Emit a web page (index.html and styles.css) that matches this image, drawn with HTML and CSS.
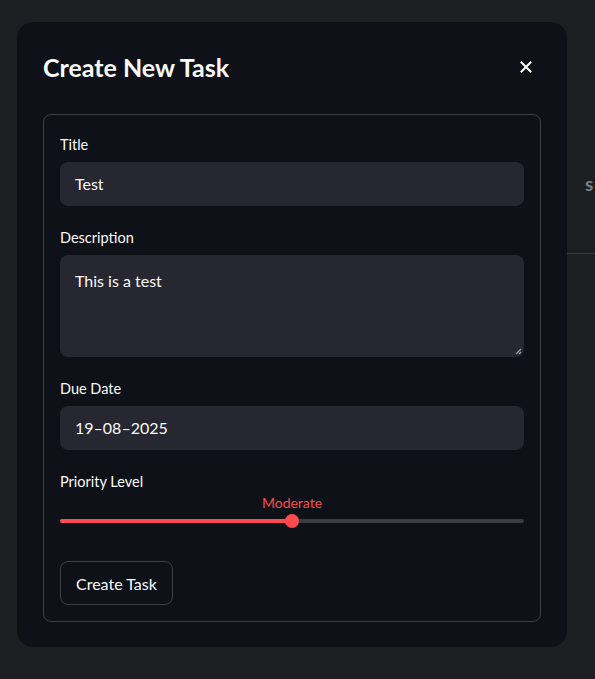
FILE: index.html
```html
<!DOCTYPE html>
<html>
<head>
<meta charset="utf-8">
<link rel="stylesheet" href="styles.css">
</head>
<body>
<div class="backdrop">
  <div class="bg-page">
    <div class="bg-text">s</div>
    <div class="bg-rule"></div>
  </div>
  <div class="modal">
    <div class="modal-head">
      <h2 class="modal-title">Create New Task</h2>
      <button class="close" aria-label="Close">
        <svg width="12" height="12" viewBox="0 0 12 12"><path d="M1.5 1.5L10.5 10.5M10.5 1.5L1.5 10.5" stroke="#fafafa" stroke-width="2" stroke-linecap="square"/></svg>
      </button>
    </div>
    <form class="form">
      <div class="field">
        <label class="label">Title</label>
        <div class="input">Test</div>
      </div>
      <div class="field">
        <label class="label">Description</label>
        <div class="input textarea">This is a test
          <svg class="grip" width="8" height="8" viewBox="0 0 8 8"><path d="M7 2L2 7M7 5L5 7" stroke="#a0a0a8" stroke-width="1.2"/></svg>
        </div>
      </div>
      <div class="field">
        <label class="label">Due Date</label>
        <div class="input">19–08–2025</div>
      </div>
      <div class="field slider-field">
        <label class="label">Priority Level</label>
        <div class="slider">
          <div class="track">
            <div class="fill" style="width:50%"></div>
            <div class="thumb" style="left:50%">
              <span class="thumb-value">Moderate</span>
            </div>
          </div>
        </div>
      </div>
      <div class="actions">
        <button type="button" class="btn">Create Task</button>
      </div>
    </form>
  </div>
</div>
</body>
</html>
```
FILE: styles.css
```css
* { box-sizing: border-box; }
html, body {
  margin: 0;
  padding: 0;
  background: #1e1f23;
  width: 595px;
  height: 679px;
  overflow: hidden;
  font-family: "Lato", "Noto Sans", sans-serif;
  color: #fafafa;
}
.backdrop {
  position: relative;
  width: 595px;
  height: 679px;
}
.bg-page {
  position: absolute;
  inset: 0;
}
.bg-text {
  position: absolute;
  left: 585px;
  top: 172px;
  font-size: 19px;
  font-weight: 700;
  color: #7c7f88;
}
.bg-rule {
  position: absolute;
  left: 560px;
  right: 0;
  top: 253px;
  height: 1px;
  background: #3a3b40;
}
.modal {
  position: absolute;
  left: 17px;
  top: 22px;
  width: 550px;
  height: 625px;
  background: #0e1117;
  border-radius: 16px;
  padding: 26px 26px 25px 26px;
}
.modal-head {
  display: flex;
  align-items: center;
  justify-content: space-between;
  height: 38px;
  margin-bottom: 28px;
}
.modal-title {
  margin: 0;
  font-size: 25px;
  font-weight: 700;
  color: #fafafa;
}
.close {
  background: none;
  border: 0;
  padding: 0;
  margin-right: 9px;
  display: flex;
  width: 12px;
  height: 12px;
}
.form {
  border: 1px solid #3d4047;
  border-radius: 8px;
  padding: 20px 16px 16px 16px;
  display: flex;
  flex-direction: column;
}
.field { display: flex; flex-direction: column; margin-bottom: 22px; }
.label {
  font-size: 14.5px;
  line-height: 20px;
  height: 20px;
  margin-bottom: 7px;
  color: #fafafa;
}
.input {
  position: relative;
  height: 44px;
  background: #262730;
  border-radius: 8px;
  padding: 0 15px;
  font-size: 16px;
  line-height: 44px;
  color: #fafafa;
}
.textarea {
  height: 102px;
  line-height: 24px;
  padding-top: 14px;
}
.grip {
  position: absolute;
  right: 2px;
  bottom: 2px;
}
.slider-field { margin-bottom: 0; }
.label + .slider { margin-top: -8px; }
.slider { height: 54px; padding-top: 28px; }
.track {
  position: relative;
  height: 4px;
  background: #3b3d44;
  border-radius: 2px;
}
.fill {
  height: 4px;
  background: #ff4b4b;
  border-radius: 2px;
}
.thumb {
  position: absolute;
  top: -5px;
  width: 14px;
  height: 14px;
  margin-left: -7px;
  background: #ff4b4b;
  border-radius: 50%;
}
.thumb-value {
  position: absolute;
  left: 50%;
  bottom: 17px;
  transform: translateX(-50%);
  font-size: 14px;
  color: #ff4b4b;
  white-space: nowrap;
}
.actions { margin-top: 16px; }
.btn {
  height: 44px;
  padding: 0 15px;
  background: #0e1117;
  border: 1px solid #3d4047;
  border-radius: 8px;
  color: #fafafa;
  font-family: inherit;
  font-size: 16px;
}
```
